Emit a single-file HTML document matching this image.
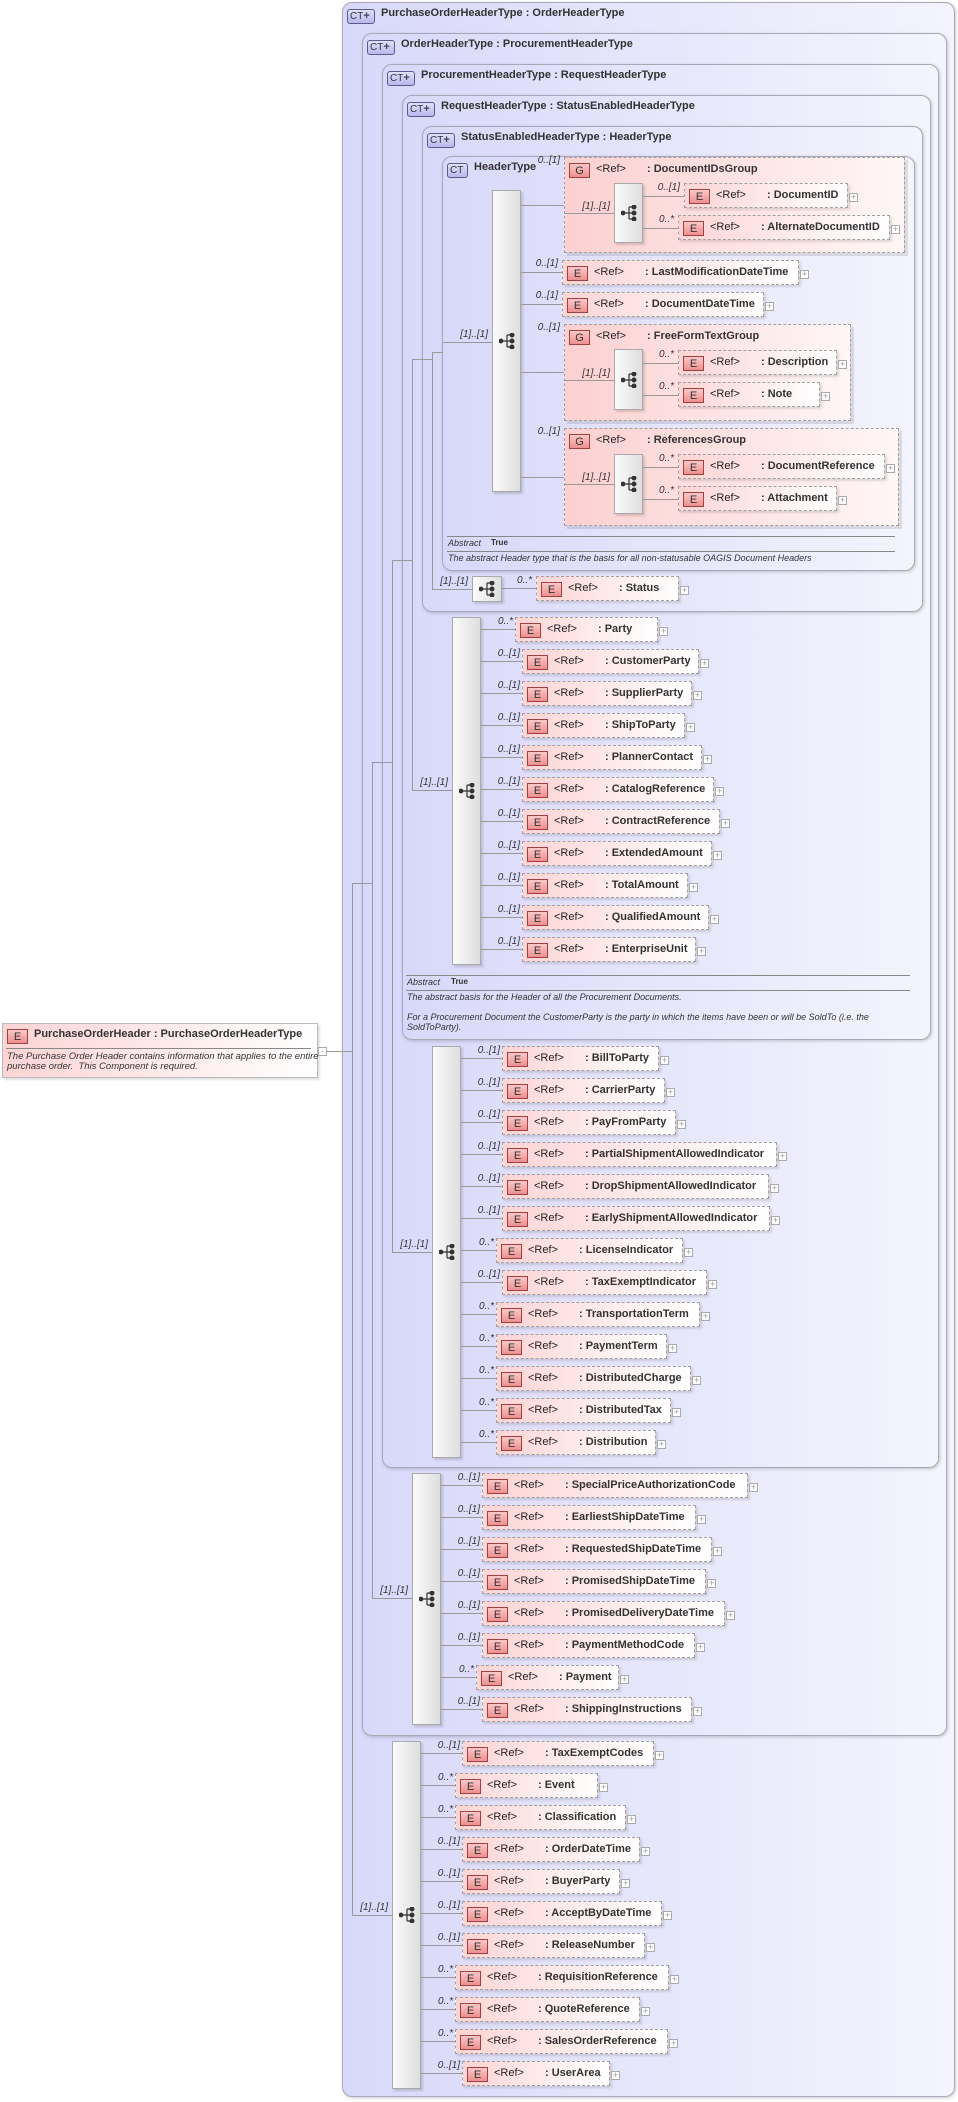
<!DOCTYPE html>
<html><head><meta charset="utf-8"><style>
*{margin:0;padding:0;box-sizing:border-box}
body{width:958px;height:2102px;background:#fff;position:relative;overflow:hidden;font-family:"Liberation Sans",sans-serif;color:#222}
.b{position:absolute;border:1px solid #a8a8b8;border-radius:10px;background:linear-gradient(to right,#d8d8fa,#f4f4fd);box-shadow:1px 1px 3px rgba(0,0,0,.2)}
.t{position:absolute;font-size:11px;font-weight:bold;color:#333;white-space:nowrap}
.ct{position:absolute;width:28px;height:15px;border:1px solid #5a5a90;border-radius:3px;background:linear-gradient(#e0e0fa,#b8b8ec);font-size:10px;line-height:13px;padding-left:2px;color:#334;white-space:nowrap}
.ct b{font-size:11px;color:#445}
.e,.g{position:absolute;height:25px;border:1px dashed #a0a0a0;background:linear-gradient(to right,#fdd4d4,#fff);box-shadow:2px 2px 2px rgba(0,0,0,.12);font-size:11px;white-space:nowrap}
.g{box-shadow:3px 3px 0 rgba(0,0,0,.1);background:linear-gradient(to right,#fcd0d0,#fff6f6)}
.ic{position:absolute;left:4px;top:5px;width:21px;height:15px;border:1px solid #a04040;background:linear-gradient(#fcc8c8,#ec9090);font-size:11px;font-style:normal;text-align:center;line-height:14px;color:#333}
.r{position:absolute;left:31px;top:5px}
.n{position:absolute;left:82px;top:5px;font-weight:bold;color:#333}
.e u{position:absolute;right:-11px;top:9px;width:9px;height:9px;border:1px solid #aaa;background:#fff;text-decoration:none;font-size:9px;line-height:7px;text-align:center;color:#999}
.h{position:absolute;height:1px;background:#999}
.v{position:absolute;width:1px;background:#999}
.m{position:absolute;width:28px;text-align:right;font-size:10px;font-style:italic;color:#333;line-height:12px;white-space:nowrap}
.s{position:absolute;border:1px solid #aaa;background:linear-gradient(to right,#fbfbfb,#dedede);box-shadow:2px 2px 2px rgba(0,0,0,.15)}
.s svg{position:absolute;left:50%;top:50%;margin:-8px 0 0 -8px}
.ab{position:absolute;font-size:9px;font-style:italic;color:#333;white-space:nowrap}
.ln{position:absolute;height:1px;background:#888}
</style></head><body>

<!-- type boxes -->
<div class="b" style="left:342px;top:2px;width:613px;height:2095px"></div>
<div class="ct" style="left:347px;top:9px">CT<b>+</b></div><div class="t" style="left:381px;top:7px">PurchaseOrderHeaderType : OrderHeaderType</div>
<div class="b" style="left:362px;top:33px;width:585px;height:1703px"></div>
<div class="ct" style="left:367px;top:40px">CT<b>+</b></div><div class="t" style="left:401px;top:38px">OrderHeaderType : ProcurementHeaderType</div>
<div class="b" style="left:382px;top:64px;width:557px;height:1404px"></div>
<div class="ct" style="left:387px;top:71px">CT<b>+</b></div><div class="t" style="left:421px;top:69px">ProcurementHeaderType : RequestHeaderType</div>
<div class="b" style="left:402px;top:95px;width:529px;height:945px"></div>
<div class="ct" style="left:407px;top:102px">CT<b>+</b></div><div class="t" style="left:441px;top:100px">RequestHeaderType : StatusEnabledHeaderType</div>
<div class="b" style="left:422px;top:126px;width:501px;height:486px"></div>
<div class="ct" style="left:427px;top:133px">CT<b>+</b></div><div class="t" style="left:461px;top:131px">StatusEnabledHeaderType : HeaderType</div>
<div class="b" style="left:442px;top:156px;width:473px;height:415px"></div>
<div class="ct" style="left:447px;top:163px;width:21px">CT</div><div class="t" style="left:474px;top:161px">HeaderType</div>

<!-- root element -->
<div class="e" style="left:2px;top:1023px;width:316px;height:55px;border:1px solid #bbb;background:linear-gradient(to right,#fdd4d4,#fff)"><i class="ic">E</i><span class="n" style="left:31px;top:4px">PurchaseOrderHeader : PurchaseOrderHeaderType</span>
<div class="ln" style="left:3px;top:24px;width:305px"></div>
<div class="ab" style="left:4px;top:28px;font-size:9.5px;line-height:10px">The Purchase Order Header contains information that applies to the entire<br>purchase order.&nbsp; This Component is required.</div></div>
<div style="position:absolute;left:318px;top:1047px;width:9px;height:9px;border:1px solid #aaa;background:#fff;font-size:9px;line-height:6px;text-align:center;color:#999">-</div>
<div class="h" style="left:327px;top:1051px;width:25px"></div>

<!-- tree lines -->
<div class="v" style="left:352px;top:883px;height:1032px"></div><div class="h" style="left:352px;top:883px;width:20px"></div><div class="h" style="left:352px;top:1915px;width:40px"></div><div class="m" style="left:360px;top:1902px">[1]..[1]</div>
<div class="v" style="left:372px;top:762px;height:836px"></div><div class="h" style="left:372px;top:762px;width:20px"></div><div class="h" style="left:372px;top:1598px;width:40px"></div><div class="m" style="left:380px;top:1585px">[1]..[1]</div>
<div class="v" style="left:392px;top:560px;height:692px"></div><div class="h" style="left:392px;top:560px;width:20px"></div><div class="h" style="left:392px;top:1252px;width:40px"></div><div class="m" style="left:400px;top:1239px">[1]..[1]</div>
<div class="v" style="left:412px;top:359px;height:431px"></div><div class="h" style="left:412px;top:359px;width:20px"></div><div class="h" style="left:412px;top:790px;width:40px"></div><div class="m" style="left:420px;top:777px">[1]..[1]</div>
<div class="v" style="left:432px;top:352px;height:237px"></div><div class="h" style="left:432px;top:352px;width:11px"></div><div class="h" style="left:432px;top:589px;width:40px"></div><div class="m" style="left:440px;top:576px">[1]..[1]</div>

<!-- HeaderType content -->
<div class="h" style="left:443px;top:342px;width:49px"></div><div class="m" style="left:460px;top:329px">[1]..[1]</div>
<div class="s" style="left:492px;top:190px;width:29px;height:302px"><svg width="16" height="16" viewBox="0 0 16 16"><g stroke="#333" stroke-width="1.2" fill="#333"><circle cx="2" cy="8" r="1.8"/><path d="M2 8H8M8 2V14M8 2H12M8 8H12M8 14H12" fill="none"/><circle cx="13" cy="2" r="1.9"/><circle cx="13" cy="8" r="1.9"/><circle cx="13" cy="14" r="1.9"/></g></svg></div>

<div class="h" style="left:521px;top:205px;width:43px"></div><div class="m" style="left:532px;top:155px">0..[1]</div>
<div class="g" style="left:564px;top:157px;width:341px;height:96px"><i class="ic">G</i><span class="r">&lt;Ref&gt;</span><span class="n">: DocumentIDsGroup</span></div>
<div class="h" style="left:564px;top:213px;width:50px"></div><div class="m" style="left:582px;top:201px">[1]..[1]</div>
<div class="s" style="left:614px;top:183px;width:29px;height:60px"><svg width="16" height="16" viewBox="0 0 16 16"><g stroke="#333" stroke-width="1.2" fill="#333"><circle cx="2" cy="8" r="1.8"/><path d="M2 8H8M8 2V14M8 2H12M8 8H12M8 14H12" fill="none"/><circle cx="13" cy="2" r="1.9"/><circle cx="13" cy="8" r="1.9"/><circle cx="13" cy="14" r="1.9"/></g></svg></div>
<div class="h" style="left:643px;top:196px;width:41px"></div><div class="m" style="left:652px;top:182px">0..[1]</div>
<div class="e" style="left:684px;top:183px;width:164px"><i class="ic">E</i><span class="r">&lt;Ref&gt;</span><span class="n">: DocumentID</span><u>+</u></div>
<div class="h" style="left:643px;top:228px;width:35px"></div><div class="m" style="left:646px;top:214px">0..*</div>
<div class="e" style="left:678px;top:215px;width:212px"><i class="ic">E</i><span class="r">&lt;Ref&gt;</span><span class="n">: AlternateDocumentID</span><u>+</u></div>

<div class="h" style="left:521px;top:272px;width:41px"></div><div class="m" style="left:530px;top:258px">0..[1]</div>
<div class="e" style="left:562px;top:260px;width:237px"><i class="ic">E</i><span class="r">&lt;Ref&gt;</span><span class="n">: LastModificationDateTime</span><u>+</u></div>
<div class="h" style="left:521px;top:304px;width:41px"></div><div class="m" style="left:530px;top:290px">0..[1]</div>
<div class="e" style="left:562px;top:292px;width:202px"><i class="ic">E</i><span class="r">&lt;Ref&gt;</span><span class="n">: DocumentDateTime</span><u>+</u></div>

<div class="h" style="left:521px;top:372px;width:43px"></div><div class="m" style="left:532px;top:322px">0..[1]</div>
<div class="g" style="left:564px;top:324px;width:287px;height:97px"><i class="ic">G</i><span class="r">&lt;Ref&gt;</span><span class="n">: FreeFormTextGroup</span></div>
<div class="h" style="left:564px;top:380px;width:50px"></div><div class="m" style="left:582px;top:368px">[1]..[1]</div>
<div class="s" style="left:614px;top:349px;width:29px;height:61px"><svg width="16" height="16" viewBox="0 0 16 16"><g stroke="#333" stroke-width="1.2" fill="#333"><circle cx="2" cy="8" r="1.8"/><path d="M2 8H8M8 2V14M8 2H12M8 8H12M8 14H12" fill="none"/><circle cx="13" cy="2" r="1.9"/><circle cx="13" cy="8" r="1.9"/><circle cx="13" cy="14" r="1.9"/></g></svg></div>
<div class="h" style="left:643px;top:363px;width:35px"></div><div class="m" style="left:646px;top:349px">0..*</div>
<div class="e" style="left:678px;top:350px;width:159px"><i class="ic">E</i><span class="r">&lt;Ref&gt;</span><span class="n">: Description</span><u>+</u></div>
<div class="h" style="left:643px;top:395px;width:35px"></div><div class="m" style="left:646px;top:381px">0..*</div>
<div class="e" style="left:678px;top:382px;width:142px"><i class="ic">E</i><span class="r">&lt;Ref&gt;</span><span class="n">: Note</span><u>+</u></div>

<div class="h" style="left:521px;top:477px;width:43px"></div><div class="m" style="left:532px;top:426px">0..[1]</div>
<div class="g" style="left:564px;top:428px;width:335px;height:98px"><i class="ic">G</i><span class="r">&lt;Ref&gt;</span><span class="n">: ReferencesGroup</span></div>
<div class="h" style="left:564px;top:484px;width:50px"></div><div class="m" style="left:582px;top:472px">[1]..[1]</div>
<div class="s" style="left:614px;top:454px;width:29px;height:60px"><svg width="16" height="16" viewBox="0 0 16 16"><g stroke="#333" stroke-width="1.2" fill="#333"><circle cx="2" cy="8" r="1.8"/><path d="M2 8H8M8 2V14M8 2H12M8 8H12M8 14H12" fill="none"/><circle cx="13" cy="2" r="1.9"/><circle cx="13" cy="8" r="1.9"/><circle cx="13" cy="14" r="1.9"/></g></svg></div>
<div class="h" style="left:643px;top:467px;width:35px"></div><div class="m" style="left:646px;top:453px">0..*</div>
<div class="e" style="left:678px;top:454px;width:207px"><i class="ic">E</i><span class="r">&lt;Ref&gt;</span><span class="n">: DocumentReference</span><u>+</u></div>
<div class="h" style="left:643px;top:499px;width:35px"></div><div class="m" style="left:646px;top:485px">0..*</div>
<div class="e" style="left:678px;top:486px;width:159px"><i class="ic">E</i><span class="r">&lt;Ref&gt;</span><span class="n">: Attachment</span><u>+</u></div>

<div class="ln" style="left:447px;top:536px;width:448px"></div>
<div class="ab" style="left:448px;top:538px">Abstract</div><div class="ab" style="left:491px;top:538px;font-style:normal;font-weight:bold;font-size:8px">True</div>
<div class="ln" style="left:447px;top:551px;width:448px"></div>
<div class="ab" style="left:448px;top:553px">The abstract Header type that is the basis for all non-statusable OAGIS Document Headers</div>

<!-- Status -->
<div class="s" style="left:472px;top:576px;width:30px;height:26px"><svg width="16" height="16" viewBox="0 0 16 16"><g stroke="#333" stroke-width="1.2" fill="#333"><circle cx="2" cy="8" r="1.8"/><path d="M2 8H8M8 2V14M8 2H12M8 8H12M8 14H12" fill="none"/><circle cx="13" cy="2" r="1.9"/><circle cx="13" cy="8" r="1.9"/><circle cx="13" cy="14" r="1.9"/></g></svg></div>
<div class="h" style="left:502px;top:588px;width:34px"></div><div class="m" style="left:504px;top:575px">0..*</div>
<div class="e" style="left:536px;top:576px;width:143px"><i class="ic">E</i><span class="r">&lt;Ref&gt;</span><span class="n">: Status</span><u>+</u></div>

<!-- Procurement seq -->
<div class="s" style="left:452px;top:617px;width:29px;height:348px"><svg width="16" height="16" viewBox="0 0 16 16"><g stroke="#333" stroke-width="1.2" fill="#333"><circle cx="2" cy="8" r="1.8"/><path d="M2 8H8M8 2V14M8 2H12M8 8H12M8 14H12" fill="none"/><circle cx="13" cy="2" r="1.9"/><circle cx="13" cy="8" r="1.9"/><circle cx="13" cy="14" r="1.9"/></g></svg></div>
<div class="h" style="left:481px;top:629px;width:34px"></div><div class="m" style="left:485px;top:616px">0..*</div><div class="e" style="left:515px;top:617px;width:143px"><i class="ic">E</i><span class="r">&lt;Ref&gt;</span><span class="n">: Party</span><u>+</u></div>
<div class="h" style="left:481px;top:661px;width:41px"></div><div class="m" style="left:492px;top:648px">0..[1]</div><div class="e" style="left:522px;top:649px;width:177px"><i class="ic">E</i><span class="r">&lt;Ref&gt;</span><span class="n">: CustomerParty</span><u>+</u></div>
<div class="h" style="left:481px;top:693px;width:41px"></div><div class="m" style="left:492px;top:680px">0..[1]</div><div class="e" style="left:522px;top:681px;width:170px"><i class="ic">E</i><span class="r">&lt;Ref&gt;</span><span class="n">: SupplierParty</span><u>+</u></div>
<div class="h" style="left:481px;top:725px;width:41px"></div><div class="m" style="left:492px;top:712px">0..[1]</div><div class="e" style="left:522px;top:713px;width:163px"><i class="ic">E</i><span class="r">&lt;Ref&gt;</span><span class="n">: ShipToParty</span><u>+</u></div>
<div class="h" style="left:481px;top:757px;width:41px"></div><div class="m" style="left:492px;top:744px">0..[1]</div><div class="e" style="left:522px;top:745px;width:180px"><i class="ic">E</i><span class="r">&lt;Ref&gt;</span><span class="n">: PlannerContact</span><u>+</u></div>
<div class="h" style="left:481px;top:789px;width:41px"></div><div class="m" style="left:492px;top:776px">0..[1]</div><div class="e" style="left:522px;top:777px;width:192px"><i class="ic">E</i><span class="r">&lt;Ref&gt;</span><span class="n">: CatalogReference</span><u>+</u></div>
<div class="h" style="left:481px;top:821px;width:41px"></div><div class="m" style="left:492px;top:808px">0..[1]</div><div class="e" style="left:522px;top:809px;width:198px"><i class="ic">E</i><span class="r">&lt;Ref&gt;</span><span class="n">: ContractReference</span><u>+</u></div>
<div class="h" style="left:481px;top:853px;width:41px"></div><div class="m" style="left:492px;top:840px">0..[1]</div><div class="e" style="left:522px;top:841px;width:190px"><i class="ic">E</i><span class="r">&lt;Ref&gt;</span><span class="n">: ExtendedAmount</span><u>+</u></div>
<div class="h" style="left:481px;top:885px;width:41px"></div><div class="m" style="left:492px;top:872px">0..[1]</div><div class="e" style="left:522px;top:873px;width:166px"><i class="ic">E</i><span class="r">&lt;Ref&gt;</span><span class="n">: TotalAmount</span><u>+</u></div>
<div class="h" style="left:481px;top:917px;width:41px"></div><div class="m" style="left:492px;top:904px">0..[1]</div><div class="e" style="left:522px;top:905px;width:187px"><i class="ic">E</i><span class="r">&lt;Ref&gt;</span><span class="n">: QualifiedAmount</span><u>+</u></div>
<div class="h" style="left:481px;top:949px;width:41px"></div><div class="m" style="left:492px;top:936px">0..[1]</div><div class="e" style="left:522px;top:937px;width:174px"><i class="ic">E</i><span class="r">&lt;Ref&gt;</span><span class="n">: EnterpriseUnit</span><u>+</u></div>

<div class="ln" style="left:406px;top:975px;width:504px"></div>
<div class="ab" style="left:407px;top:977px">Abstract</div><div class="ab" style="left:451px;top:977px;font-style:normal;font-weight:bold;font-size:8px">True</div>
<div class="ln" style="left:406px;top:990px;width:504px"></div>
<div class="ab" style="left:407px;top:992px;line-height:10px">The abstract basis for the Header of all the Procurement Documents.<br><br>For a Procurement Document the CustomerParty is the party in which the items have been or will be SoldTo (i.e. the<br>SoldToParty).</div>

<!-- Procurement own seq -->
<div class="s" style="left:432px;top:1046px;width:29px;height:412px"><svg width="16" height="16" viewBox="0 0 16 16"><g stroke="#333" stroke-width="1.2" fill="#333"><circle cx="2" cy="8" r="1.8"/><path d="M2 8H8M8 2V14M8 2H12M8 8H12M8 14H12" fill="none"/><circle cx="13" cy="2" r="1.9"/><circle cx="13" cy="8" r="1.9"/><circle cx="13" cy="14" r="1.9"/></g></svg></div>
<div class="h" style="left:461px;top:1058px;width:41px"></div><div class="m" style="left:472px;top:1045px">0..[1]</div><div class="e" style="left:502px;top:1046px;width:157px"><i class="ic">E</i><span class="r">&lt;Ref&gt;</span><span class="n">: BillToParty</span><u>+</u></div>
<div class="h" style="left:461px;top:1090px;width:41px"></div><div class="m" style="left:472px;top:1077px">0..[1]</div><div class="e" style="left:502px;top:1078px;width:163px"><i class="ic">E</i><span class="r">&lt;Ref&gt;</span><span class="n">: CarrierParty</span><u>+</u></div>
<div class="h" style="left:461px;top:1122px;width:41px"></div><div class="m" style="left:472px;top:1109px">0..[1]</div><div class="e" style="left:502px;top:1110px;width:174px"><i class="ic">E</i><span class="r">&lt;Ref&gt;</span><span class="n">: PayFromParty</span><u>+</u></div>
<div class="h" style="left:461px;top:1154px;width:41px"></div><div class="m" style="left:472px;top:1141px">0..[1]</div><div class="e" style="left:502px;top:1142px;width:275px"><i class="ic">E</i><span class="r">&lt;Ref&gt;</span><span class="n">: PartialShipmentAllowedIndicator</span><u>+</u></div>
<div class="h" style="left:461px;top:1186px;width:41px"></div><div class="m" style="left:472px;top:1173px">0..[1]</div><div class="e" style="left:502px;top:1174px;width:267px"><i class="ic">E</i><span class="r">&lt;Ref&gt;</span><span class="n">: DropShipmentAllowedIndicator</span><u>+</u></div>
<div class="h" style="left:461px;top:1218px;width:41px"></div><div class="m" style="left:472px;top:1205px">0..[1]</div><div class="e" style="left:502px;top:1206px;width:268px"><i class="ic">E</i><span class="r">&lt;Ref&gt;</span><span class="n">: EarlyShipmentAllowedIndicator</span><u>+</u></div>
<div class="h" style="left:461px;top:1250px;width:35px"></div><div class="m" style="left:466px;top:1237px">0..*</div><div class="e" style="left:496px;top:1238px;width:187px"><i class="ic">E</i><span class="r">&lt;Ref&gt;</span><span class="n">: LicenseIndicator</span><u>+</u></div>
<div class="h" style="left:461px;top:1282px;width:41px"></div><div class="m" style="left:472px;top:1269px">0..[1]</div><div class="e" style="left:502px;top:1270px;width:205px"><i class="ic">E</i><span class="r">&lt;Ref&gt;</span><span class="n">: TaxExemptIndicator</span><u>+</u></div>
<div class="h" style="left:461px;top:1314px;width:35px"></div><div class="m" style="left:466px;top:1301px">0..*</div><div class="e" style="left:496px;top:1302px;width:204px"><i class="ic">E</i><span class="r">&lt;Ref&gt;</span><span class="n">: TransportationTerm</span><u>+</u></div>
<div class="h" style="left:461px;top:1346px;width:35px"></div><div class="m" style="left:466px;top:1333px">0..*</div><div class="e" style="left:496px;top:1334px;width:171px"><i class="ic">E</i><span class="r">&lt;Ref&gt;</span><span class="n">: PaymentTerm</span><u>+</u></div>
<div class="h" style="left:461px;top:1378px;width:35px"></div><div class="m" style="left:466px;top:1365px">0..*</div><div class="e" style="left:496px;top:1366px;width:195px"><i class="ic">E</i><span class="r">&lt;Ref&gt;</span><span class="n">: DistributedCharge</span><u>+</u></div>
<div class="h" style="left:461px;top:1410px;width:35px"></div><div class="m" style="left:466px;top:1397px">0..*</div><div class="e" style="left:496px;top:1398px;width:175px"><i class="ic">E</i><span class="r">&lt;Ref&gt;</span><span class="n">: DistributedTax</span><u>+</u></div>
<div class="h" style="left:461px;top:1442px;width:35px"></div><div class="m" style="left:466px;top:1429px">0..*</div><div class="e" style="left:496px;top:1430px;width:160px"><i class="ic">E</i><span class="r">&lt;Ref&gt;</span><span class="n">: Distribution</span><u>+</u></div>

<!-- Order own seq -->
<div class="s" style="left:412px;top:1473px;width:29px;height:252px"><svg width="16" height="16" viewBox="0 0 16 16"><g stroke="#333" stroke-width="1.2" fill="#333"><circle cx="2" cy="8" r="1.8"/><path d="M2 8H8M8 2V14M8 2H12M8 8H12M8 14H12" fill="none"/><circle cx="13" cy="2" r="1.9"/><circle cx="13" cy="8" r="1.9"/><circle cx="13" cy="14" r="1.9"/></g></svg></div>
<div class="h" style="left:441px;top:1485px;width:41px"></div><div class="m" style="left:452px;top:1472px">0..[1]</div><div class="e" style="left:482px;top:1473px;width:266px"><i class="ic">E</i><span class="r">&lt;Ref&gt;</span><span class="n">: SpecialPriceAuthorizationCode</span><u>+</u></div>
<div class="h" style="left:441px;top:1517px;width:41px"></div><div class="m" style="left:452px;top:1504px">0..[1]</div><div class="e" style="left:482px;top:1505px;width:214px"><i class="ic">E</i><span class="r">&lt;Ref&gt;</span><span class="n">: EarliestShipDateTime</span><u>+</u></div>
<div class="h" style="left:441px;top:1549px;width:41px"></div><div class="m" style="left:452px;top:1536px">0..[1]</div><div class="e" style="left:482px;top:1537px;width:230px"><i class="ic">E</i><span class="r">&lt;Ref&gt;</span><span class="n">: RequestedShipDateTime</span><u>+</u></div>
<div class="h" style="left:441px;top:1581px;width:41px"></div><div class="m" style="left:452px;top:1568px">0..[1]</div><div class="e" style="left:482px;top:1569px;width:224px"><i class="ic">E</i><span class="r">&lt;Ref&gt;</span><span class="n">: PromisedShipDateTime</span><u>+</u></div>
<div class="h" style="left:441px;top:1613px;width:41px"></div><div class="m" style="left:452px;top:1600px">0..[1]</div><div class="e" style="left:482px;top:1601px;width:243px"><i class="ic">E</i><span class="r">&lt;Ref&gt;</span><span class="n">: PromisedDeliveryDateTime</span><u>+</u></div>
<div class="h" style="left:441px;top:1645px;width:41px"></div><div class="m" style="left:452px;top:1632px">0..[1]</div><div class="e" style="left:482px;top:1633px;width:213px"><i class="ic">E</i><span class="r">&lt;Ref&gt;</span><span class="n">: PaymentMethodCode</span><u>+</u></div>
<div class="h" style="left:441px;top:1677px;width:35px"></div><div class="m" style="left:446px;top:1664px">0..*</div><div class="e" style="left:476px;top:1665px;width:143px"><i class="ic">E</i><span class="r">&lt;Ref&gt;</span><span class="n">: Payment</span><u>+</u></div>
<div class="h" style="left:441px;top:1709px;width:41px"></div><div class="m" style="left:452px;top:1696px">0..[1]</div><div class="e" style="left:482px;top:1697px;width:210px"><i class="ic">E</i><span class="r">&lt;Ref&gt;</span><span class="n">: ShippingInstructions</span><u>+</u></div>

<!-- PurchaseOrder own seq -->
<div class="s" style="left:392px;top:1741px;width:29px;height:348px"><svg width="16" height="16" viewBox="0 0 16 16"><g stroke="#333" stroke-width="1.2" fill="#333"><circle cx="2" cy="8" r="1.8"/><path d="M2 8H8M8 2V14M8 2H12M8 8H12M8 14H12" fill="none"/><circle cx="13" cy="2" r="1.9"/><circle cx="13" cy="8" r="1.9"/><circle cx="13" cy="14" r="1.9"/></g></svg></div>
<div class="h" style="left:421px;top:1753px;width:41px"></div><div class="m" style="left:432px;top:1740px">0..[1]</div><div class="e" style="left:462px;top:1741px;width:192px"><i class="ic">E</i><span class="r">&lt;Ref&gt;</span><span class="n">: TaxExemptCodes</span><u>+</u></div>
<div class="h" style="left:421px;top:1785px;width:34px"></div><div class="m" style="left:425px;top:1772px">0..*</div><div class="e" style="left:455px;top:1773px;width:143px"><i class="ic">E</i><span class="r">&lt;Ref&gt;</span><span class="n">: Event</span><u>+</u></div>
<div class="h" style="left:421px;top:1817px;width:34px"></div><div class="m" style="left:425px;top:1804px">0..*</div><div class="e" style="left:455px;top:1805px;width:171px"><i class="ic">E</i><span class="r">&lt;Ref&gt;</span><span class="n">: Classification</span><u>+</u></div>
<div class="h" style="left:421px;top:1849px;width:41px"></div><div class="m" style="left:432px;top:1836px">0..[1]</div><div class="e" style="left:462px;top:1837px;width:178px"><i class="ic">E</i><span class="r">&lt;Ref&gt;</span><span class="n">: OrderDateTime</span><u>+</u></div>
<div class="h" style="left:421px;top:1881px;width:41px"></div><div class="m" style="left:432px;top:1868px">0..[1]</div><div class="e" style="left:462px;top:1869px;width:158px"><i class="ic">E</i><span class="r">&lt;Ref&gt;</span><span class="n">: BuyerParty</span><u>+</u></div>
<div class="h" style="left:421px;top:1913px;width:41px"></div><div class="m" style="left:432px;top:1900px">0..[1]</div><div class="e" style="left:462px;top:1901px;width:200px"><i class="ic">E</i><span class="r">&lt;Ref&gt;</span><span class="n">: AcceptByDateTime</span><u>+</u></div>
<div class="h" style="left:421px;top:1945px;width:41px"></div><div class="m" style="left:432px;top:1932px">0..[1]</div><div class="e" style="left:462px;top:1933px;width:183px"><i class="ic">E</i><span class="r">&lt;Ref&gt;</span><span class="n">: ReleaseNumber</span><u>+</u></div>
<div class="h" style="left:421px;top:1977px;width:34px"></div><div class="m" style="left:425px;top:1964px">0..*</div><div class="e" style="left:455px;top:1965px;width:214px"><i class="ic">E</i><span class="r">&lt;Ref&gt;</span><span class="n">: RequisitionReference</span><u>+</u></div>
<div class="h" style="left:421px;top:2009px;width:34px"></div><div class="m" style="left:425px;top:1996px">0..*</div><div class="e" style="left:455px;top:1997px;width:185px"><i class="ic">E</i><span class="r">&lt;Ref&gt;</span><span class="n">: QuoteReference</span><u>+</u></div>
<div class="h" style="left:421px;top:2041px;width:34px"></div><div class="m" style="left:425px;top:2028px">0..*</div><div class="e" style="left:455px;top:2029px;width:213px"><i class="ic">E</i><span class="r">&lt;Ref&gt;</span><span class="n">: SalesOrderReference</span><u>+</u></div>
<div class="h" style="left:421px;top:2073px;width:41px"></div><div class="m" style="left:432px;top:2060px">0..[1]</div><div class="e" style="left:462px;top:2061px;width:148px"><i class="ic">E</i><span class="r">&lt;Ref&gt;</span><span class="n">: UserArea</span><u>+</u></div>

</body></html>
